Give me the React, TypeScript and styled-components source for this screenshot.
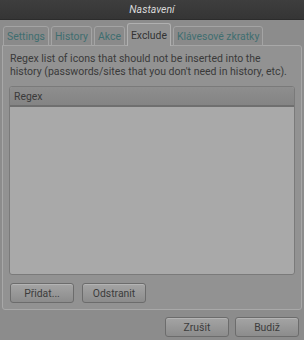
import React from 'react';
import styled, { createGlobalStyle } from 'styled-components';

const Global = createGlobalStyle`
  html, body {
    margin: 0;
    padding: 0;
    background: #8c8c8c;
    font-family: Roboto, "Liberation Sans", sans-serif;
  }
`;

const Window = styled.div`
  width: 304px;
  height: 340px;
  display: flex;
  flex-direction: column;
  background: #8c8c8c;
  overflow: hidden;
`;

const TitleBar = styled.div`
  height: 19px;
  flex: none;
  display: flex;
  align-items: center;
  justify-content: center;
  background: linear-gradient(#3e3e3e, #353535);
  color: #d8d8d8;
  font-style: italic;
  font-size: 10.5px;
  border-bottom: 1px solid #2c2c2c;
`;

const Body = styled.div`
  flex: 1;
  display: flex;
  flex-direction: column;
  padding: 3px 2px 4px 2px;
`;

const TabBar = styled.div`
  display: flex;
  align-items: flex-end;
  gap: 2px;
  padding-left: 1px;
  height: 23px;
  position: relative;
  z-index: 1;
  margin-bottom: -1px;
`;

const Tab = styled.div<{ $active?: boolean }>`
  height: ${p => (p.$active ? 23 : 20)}px;
  box-sizing: border-box;
  padding: 0 3px;
  display: flex;
  align-items: center;
  font-size: 10.4px;
  white-space: nowrap;
  color: ${p => (p.$active ? '#333' : '#3f6e70')};
  background: ${p => (p.$active ? '#929292' : '#8a8a8a')};
  border: 1px solid ${p => (p.$active ? '#b0b0b0' : '#a4a4a4')};
  border-bottom: ${p => (p.$active ? 'none' : '1px solid #a4a4a4')};
  border-radius: 3px 3px 0 0;
`;

const Panel = styled.div`
  flex: none;
  height: 265px;
  box-sizing: border-box;
  border: 1px solid #a8a8a8;
  border-radius: 0 3px 3px 3px;
  background: #929292;
  padding: 6px 6px 6px 6px;
  display: flex;
  flex-direction: column;
`;

const Info = styled.p`
  margin: 0 0 8px 1px;
  font-size: 10.5px;
  line-height: 13px;
  white-space: nowrap;
  color: #3a3a3a;
`;

const List = styled.div`
  flex: 1;
  border: 1px solid #7a7a7a;
  border-radius: 3px;
  background: #a9a9a9;
  display: flex;
  flex-direction: column;
  overflow: hidden;
`;

const Header = styled.div`
  height: 18px;
  flex: none;
  display: flex;
  align-items: center;
  padding-left: 4px;
  font-size: 10.4px;
  color: #3a3a3a;
  background: linear-gradient(#8e8e8e, #848484);
  border-bottom: 2px solid #6f6f6f;
`;

const Row = styled.div`
  display: flex;
  gap: 8px;
  margin-top: 8px;
  padding-left: 1px;
`;

const Footer = styled.div`
  display: flex;
  justify-content: flex-end;
  gap: 6px;
  margin-top: 7px;
  padding-right: 3px;
`;

const Button = styled.button`
  width: 64px;
  height: 20px;
  padding: 0;
  font-family: inherit;
  font-size: 10.4px;
  color: #3c3c3c;
  border: 1px solid #6c6c6c;
  border-radius: 3px;
  background: linear-gradient(#a4a4a4, #8c8c8c);
  box-shadow: inset 0 1px 0 #b4b4b4;
`;

export default function App() {
  return (
    <Window>
      <Global />
      <TitleBar>Nastavení</TitleBar>
      <Body>
        <TabBar>
          <Tab>Settings</Tab>
          <Tab>History</Tab>
          <Tab>Akce</Tab>
          <Tab $active>Exclude</Tab>
          <Tab>Klávesové zkratky</Tab>
        </TabBar>
        <Panel>
          <Info>
            Regex list of icons that should not be inserted into the
            <br />
            history (passwords/sites that you don't need in history, etc).
          </Info>
          <List>
            <Header>Regex</Header>
          </List>
          <Row>
            <Button>Přidat...</Button>
            <Button>Odstranit</Button>
          </Row>
        </Panel>
        <Footer>
          <Button>Zrušit</Button>
          <Button>Budiž</Button>
        </Footer>
      </Body>
    </Window>
  );
}
